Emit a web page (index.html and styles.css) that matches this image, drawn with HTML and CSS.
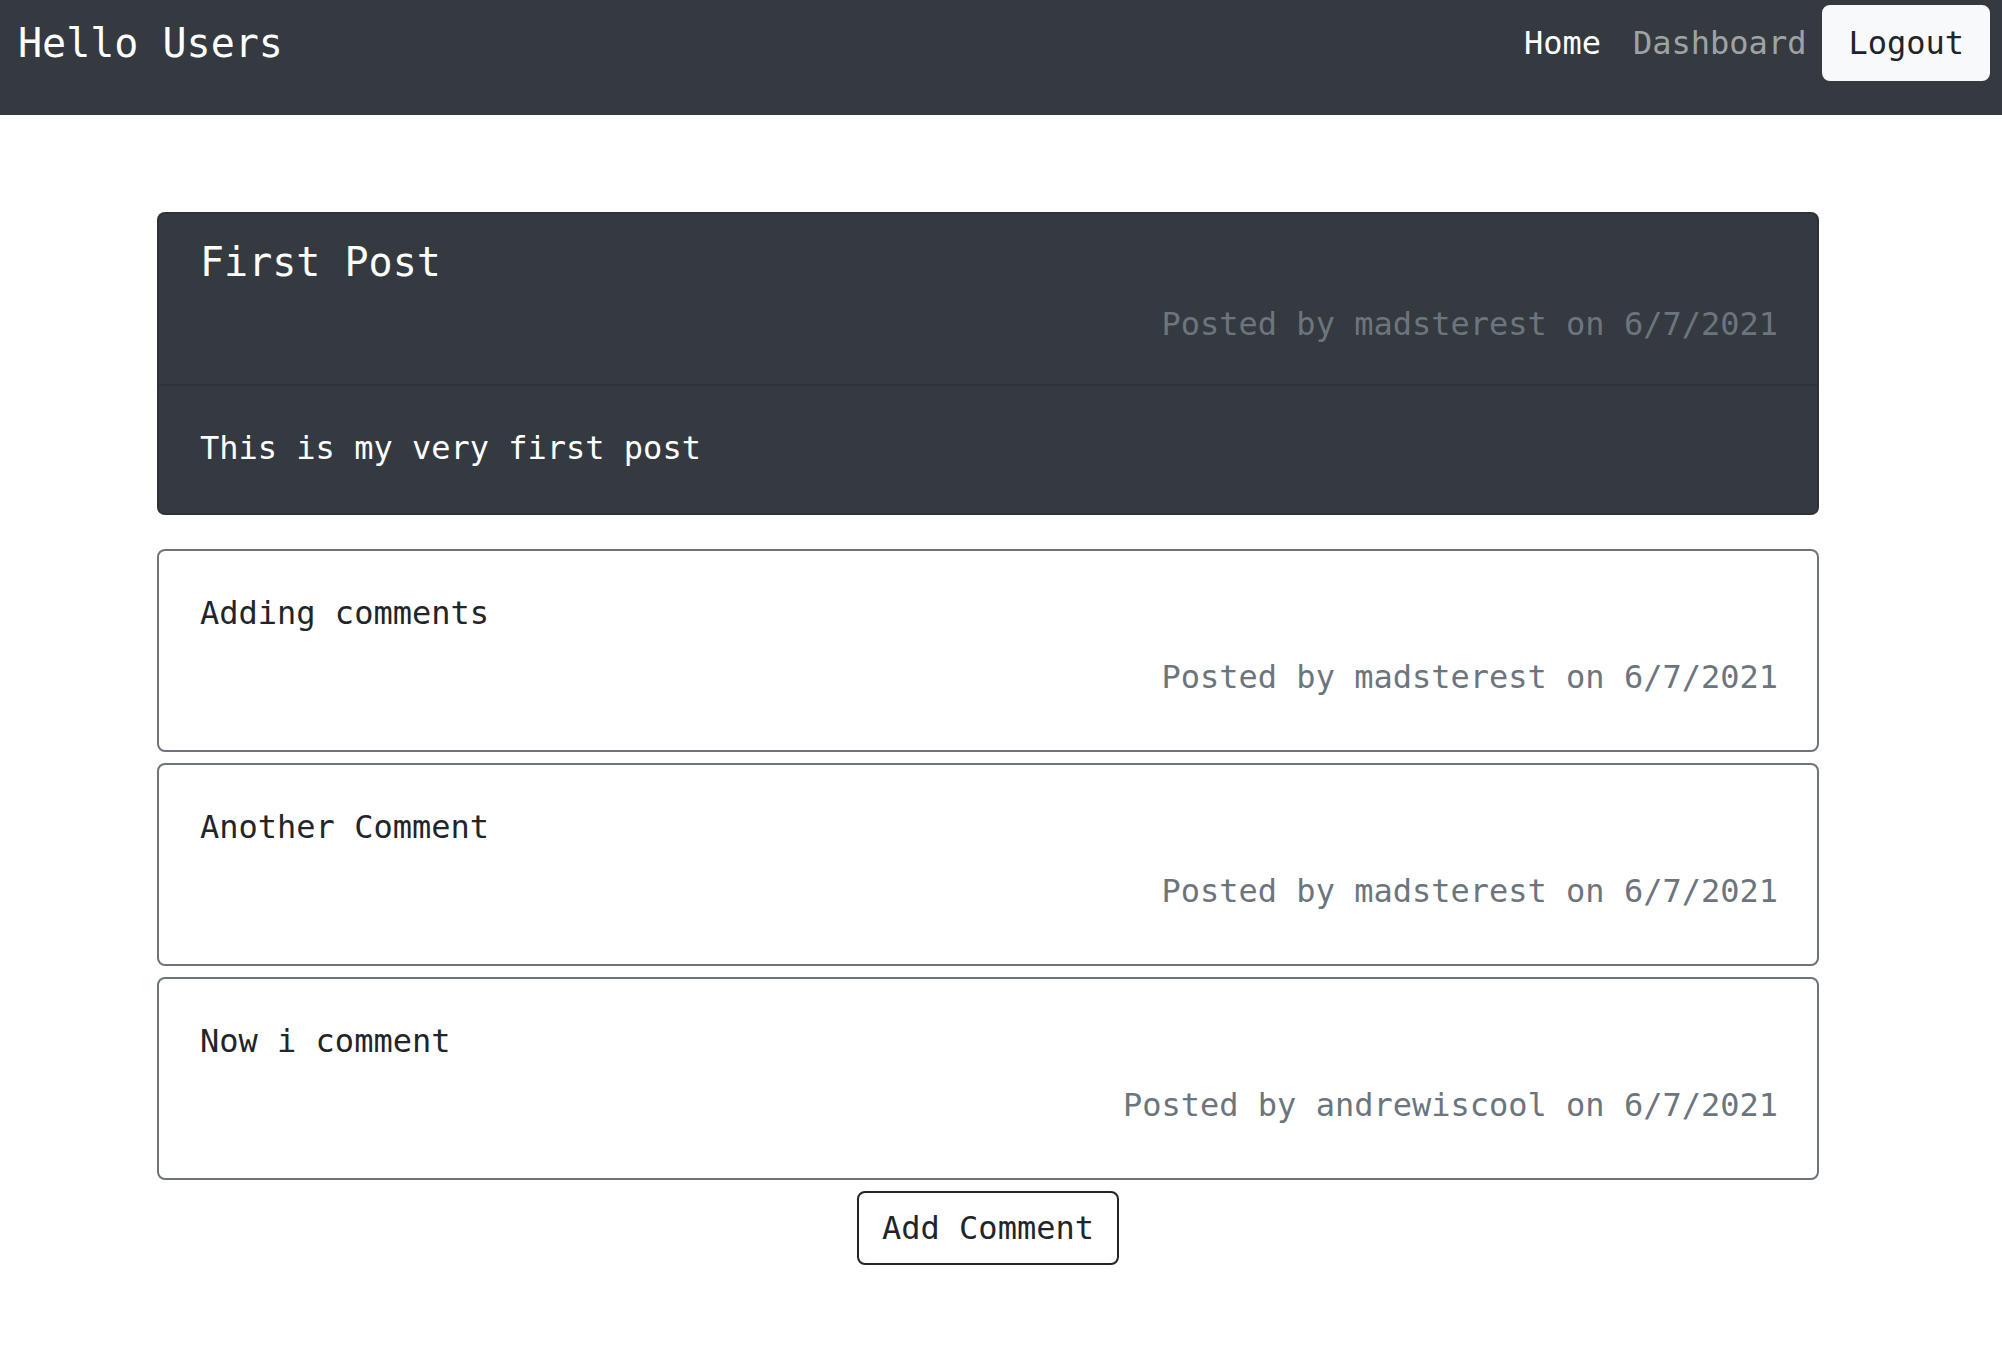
FILE: index.html
```html
<!DOCTYPE html>
<html lang="en">
<head>
<meta charset="utf-8">
<title>Hello Users</title>
<link rel="stylesheet" href="styles.css">
</head>
<body>
<nav class="navbar">
  <div class="nav-inner">
    <a class="brand" href="#">Hello Users</a>
    <div class="nav-links">
      <a class="nav-link active" href="#">Home</a>
      <a class="nav-link" href="#">Dashboard</a>
      <button class="btn btn-light" type="button">Logout</button>
    </div>
  </div>
</nav>
<main class="container">
  <section class="post-card">
    <div class="post-header">
      <h5 class="post-title">First Post</h5>
      <p class="meta">Posted by madsterest on 6/7/2021</p>
    </div>
    <div class="post-body">
      <p class="post-text">This is my very first post</p>
    </div>
  </section>
  <div class="comments">
    <div class="comment-card">
      <p class="comment-text">Adding comments</p>
      <p class="meta">Posted by madsterest on 6/7/2021</p>
    </div>
    <div class="comment-card">
      <p class="comment-text">Another Comment</p>
      <p class="meta">Posted by madsterest on 6/7/2021</p>
    </div>
    <div class="comment-card">
      <p class="comment-text">Now i comment</p>
      <p class="meta">Posted by andrewiscool on 6/7/2021</p>
    </div>
  </div>
  <div class="actions">
    <button class="btn btn-outline" type="button">Add Comment</button>
  </div>
</main>
</body>
</html>
```

FILE: styles.css
```css
* { box-sizing: border-box; }
html, body { margin: 0; padding: 0; }
body {
  background: #ffffff;
  color: #212529;
  font-family: "DejaVu Sans Mono", "Liberation Mono", monospace;
  font-size: 32px;
  line-height: 48px;
}
p, h5 { margin: 0; }

.navbar {
  background: #343a40;
  height: 115px;
  padding: 5px 12px 0 18px;
}
.nav-inner {
  height: 76px;
  display: flex;
  align-items: center;
  justify-content: space-between;
}
.brand {
  color: #ffffff;
  text-decoration: none;
  font-size: 40px;
  line-height: 60px;
}
.nav-links {
  display: flex;
  align-items: center;
}
.nav-link {
  color: rgba(255, 255, 255, 0.55);
  text-decoration: none;
  padding: 0 16px;
}
.nav-link.active { color: #ffffff; }

.btn {
  font-family: inherit;
  font-size: 32px;
  line-height: 48px;
  padding: 12px 24px;
  border-radius: 8px;
  border: 2px solid transparent;
  cursor: pointer;
}
.btn-light {
  background: #f8f9fa;
  border-color: #f8f9fa;
  color: #212529;
}
.btn-outline {
  background: transparent;
  border-color: #212529;
  color: #212529;
  padding: 11px 23px;
}

.container {
  width: 1662px;
  margin: 97px 0 0 157px;
}

.post-card {
  background: #343a40;
  border: 2px solid rgba(0, 0, 0, 0.125);
  border-radius: 8px;
  color: #ffffff;
}
.post-header {
  padding: 24px 39px 36px 41px;
  border-bottom: 2px solid rgba(0, 0, 0, 0.125);
}
.post-title {
  font-size: 40px;
  font-weight: 400;
  line-height: 48px;
  margin-bottom: 14px;
}
.post-body {
  padding: 38px 39px 41px 41px;
}
.meta { color: #6c757d; text-align: right; }

.comments {
  margin-top: 34px;
  display: flex;
  flex-direction: column;
  gap: 11px;
}
.comment-card {
  border: 2px solid #6c757d;
  border-radius: 8px;
  padding: 38px 39px 49px 41px;
}
.comment-text { margin-bottom: 16px; }

.actions {
  display: flex;
  justify-content: center;
  margin-top: 11px;
}
```
